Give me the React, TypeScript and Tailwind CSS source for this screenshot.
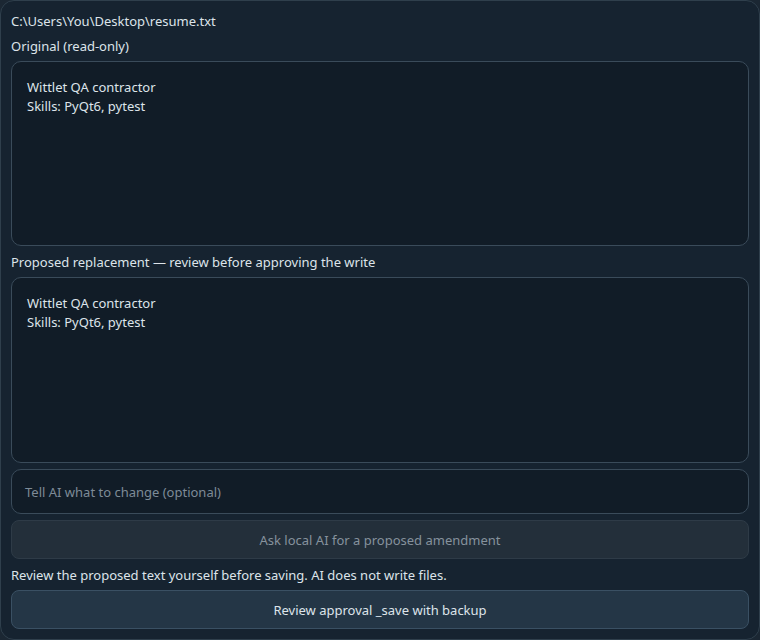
import React from "react";

export default function App() {
  const font = { fontFamily: '"Noto Sans", "Open Sans", sans-serif' };
  return (
    <div className="w-[760px] h-[640px] bg-[#1b2733]" style={font}>
      <div className="w-full h-full flex flex-col gap-[6px] p-[10px] border border-[#2f3f4c] rounded-[14px] bg-[#162330] text-[#dde4ea] text-[13px] leading-[19px]">
        <div className="h-[19px] leading-[21px] shrink-0">C:\Users\You\Desktop\resume.txt</div>
        <div className="h-[19px] leading-[21px] shrink-0">Original (read-only)</div>
        <div className="h-[185px] shrink-0 rounded-[10px] border border-[#3a4b5a] bg-[#111c27] px-[15px] pt-[16px]">
          <div>Wittlet QA contractor</div>
          <div>Skills: PyQt6, pytest</div>
        </div>
        <div className="h-[19px] leading-[21px] shrink-0">Proposed replacement — review before approving the write</div>
        <div className="flex-1 min-h-0 rounded-[10px] border border-[#3a4b5a] bg-[#111c27] px-[15px] pt-[16px]">
          <div>Wittlet QA contractor</div>
          <div>Skills: PyQt6, pytest</div>
        </div>
        <div className="h-[45px] shrink-0 rounded-[10px] border border-[#3a4b5a] bg-[#111c27] px-[13px] pt-[2px] flex items-center text-[#7e8b97]">
          Tell AI what to change (optional)
        </div>
        <div className="h-[39px] shrink-0 rounded-[8px] border border-[#2e3b47] bg-[#232f3a] pt-[2px] flex items-center justify-center text-[#86929d]">
          Ask local AI for a proposed amendment
        </div>
        <div className="h-[19px] leading-[21px] shrink-0">Review the proposed text yourself before saving. AI does not write files.</div>
        <div className="h-[39px] shrink-0 rounded-[8px] border border-[#3a5063] bg-[#243646] pt-[2px] flex items-center justify-center text-[#dde4ea]">
          Review approval _save with backup
        </div>
      </div>
    </div>
  );
}
